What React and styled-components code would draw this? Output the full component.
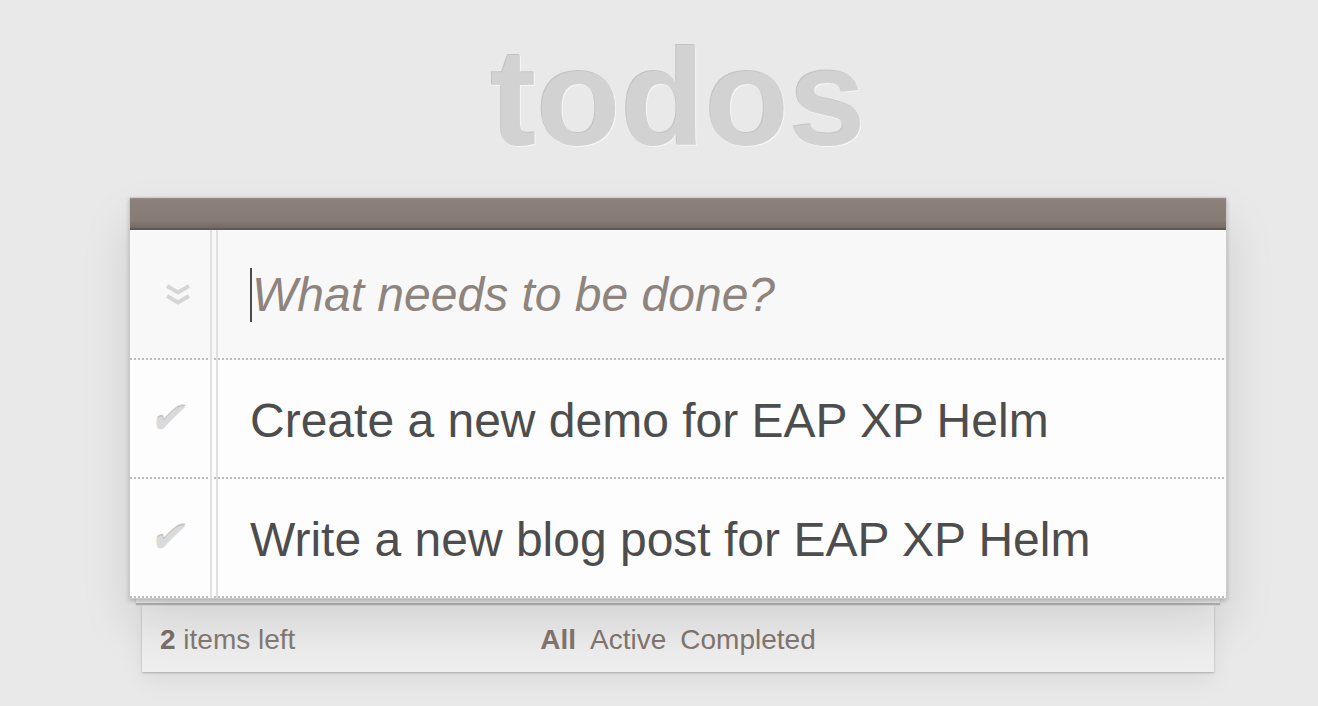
import styled, { createGlobalStyle } from 'styled-components';

const GlobalStyle = createGlobalStyle`
  html, body {
    margin: 0;
    padding: 0;
  }
  body {
    background: #e9e9e9;
    font: 28px 'Liberation Sans', Helvetica, Arial, sans-serif;
    color: #4d4d4d;
  }
`;

const Page = styled.div`
  width: 1098px;
  margin-left: 129px;
  padding-top: 28px;
  padding-bottom: 40px;
`;

const Title = styled.h1`
  margin: 0;
  font-size: 138px;
  line-height: 139px;
  font-weight: 700;
  text-align: center;
  color: #d2d2d2;
  text-shadow: -1px -1px 0 rgba(0, 0, 0, 0.16), 1px 1px 0 rgba(255, 255, 255, 0.6);
`;

const Card = styled.section`
  position: relative;
  z-index: 2;
  margin-top: 30px;
  background: #fdfdfd;
  border: 1px solid #cbcbcb;
  border-radius: 2px 2px 0 0;
  box-shadow: 0 2px 4px rgba(0, 0, 0, 0.2), 0 25px 50px rgba(0, 0, 0, 0.12);

  &::before {
    content: '';
    position: absolute;
    top: 32px;
    bottom: 0;
    left: 80px;
    width: 4px;
    border-left: 2px solid #e0e0e0;
    border-right: 2px solid #e0e0e0;
  }
`;

const HeaderBar = styled.div`
  height: 30px;
  background: linear-gradient(#8b807a, #867b75 75%, #746a64);
  border-bottom: 2px solid #62584f;
  box-shadow: inset 0 1px 0 rgba(255, 255, 255, 0.12);
`;

const Row = styled.div`
  display: grid;
  grid-template-columns: 80px 1fr;
  align-items: center;
  padding-bottom: 2px;
  background-image: repeating-linear-gradient(to right, #bdbdbd 0 2px, transparent 2px 4px);
  background-size: 100% 2px;
  background-repeat: no-repeat;
  background-position: bottom left;
`;

const NewTodoRow = styled(Row)`
  height: 126px;
  padding-top: 2px;
  background-color: rgba(0, 0, 0, 0.02);
`;

const IconCell = styled.div`
  display: flex;
  justify-content: center;
  align-items: center;
  padding-left: ${p => p.shift || 0}px;
`;

const Entry = styled.div`
  display: flex;
  align-items: center;
  padding-left: 40px;
`;

const Caret = styled.span`
  width: 2px;
  height: 54px;
  background: #4a4a4a;
`;

const Input = styled.input`
  flex: 1;
  border: none;
  outline: none;
  background: transparent;
  padding: 0;
  margin: 0;
  font: italic 48px 'Liberation Sans', Helvetica, Arial, sans-serif;
  line-height: 58px;
  color: #4d4d4d;

  &::placeholder {
    color: #8e847e;
    font-style: italic;
  }
`;

const Check = styled.span`
  font-family: 'DejaVu Sans', sans-serif;
  font-size: 42px;
  line-height: 1;
  color: #dadada;
  text-shadow: 0 -2px 0 #c4c4c4;
  transform: skewX(-12deg);
`;

const Label = styled.div`
  padding: 4px 0 0 40px;
  font-size: 48px;
  line-height: 113px;
  color: #4d4d4d;
  white-space: nowrap;
`;

const Sheet = styled.div`
  position: relative;
  z-index: 1;
  height: 4px;
  margin: 0 7px;
  background: #f3f3f3;
  border-bottom: 2px solid #b9b9b9;
  box-shadow: 0 0 1px rgba(0, 0, 0, 0.3);
`;

const Footer = styled.footer`
  display: grid;
  grid-template-columns: 1fr auto 1fr;
  align-items: center;
  height: 64px;
  margin: 0 13px;
  padding: 3px 18px 0;
  background: #eeeeee;
  color: #857b75;
  box-shadow: 0 1px 2px rgba(0, 0, 0, 0.25), 0 10px 24px rgba(0, 0, 0, 0.06);
`;

const Count = styled.span`
  strong {
    color: #7a706a;
  }
`;

const Filters = styled.nav`
  display: flex;
  gap: 14px;
`;

const FilterLink = styled.a`
  color: #83776f;
  text-decoration: none;
  font-weight: ${p => (p.selected ? 700 : 400)};
`;

function ChevronsDown() {
  return (
    <svg width="26" height="24" viewBox="0 0 26 24">
      <g fill="none" stroke="#d6d6d6" strokeWidth="4">
        <path d="M2 3 L13 9.5 L24 3" />
        <path d="M2 13 L13 19.5 L24 13" />
      </g>
    </svg>
  );
}

const todos = [
  'Create a new demo for EAP XP Helm',
  'Write a new blog post for EAP XP Helm',
];

function App() {
  return (
    <>
      <GlobalStyle />
      <Page>
        <Title>todos</Title>
        <Card>
          <HeaderBar />
          <NewTodoRow>
            <IconCell shift={16}>
              <ChevronsDown />
            </IconCell>
            <Entry>
              <Caret />
              <Input placeholder="What needs to be done?" />
            </Entry>
          </NewTodoRow>
          {todos.map(t => (
            <Row key={t}>
              <IconCell>
                <Check>✔</Check>
              </IconCell>
              <Label>{t}</Label>
            </Row>
          ))}
        </Card>
        <Sheet />
        <Footer>
          <Count><strong>2</strong> items left</Count>
          <Filters>
            <FilterLink href="#/" selected>All</FilterLink>
            <FilterLink href="#/active">Active</FilterLink>
            <FilterLink href="#/completed">Completed</FilterLink>
          </Filters>
        </Footer>
      </Page>
    </>
  );
}

export default App;
